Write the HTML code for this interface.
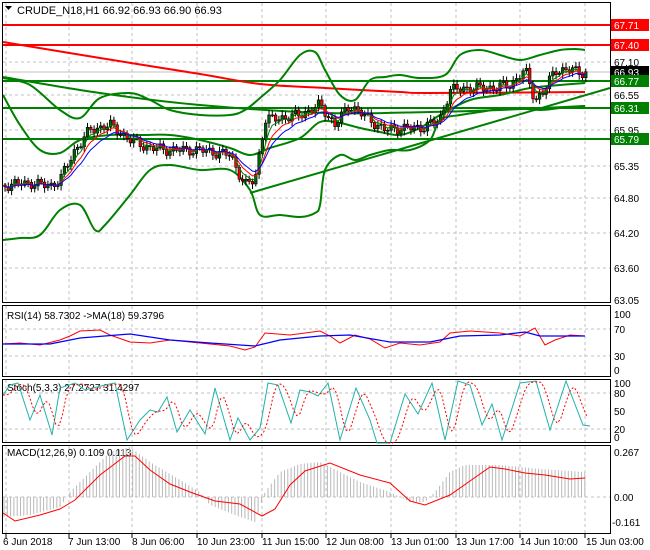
<!DOCTYPE html>
<html><head><meta charset="utf-8"><style>
html,body{margin:0;padding:0;background:#fff;width:650px;height:550px;overflow:hidden}
svg{display:block}
text{font-family:"Liberation Sans",sans-serif;font-size:10px;fill:#000}
</style></head><body>
<svg id="s" width="650" height="550" viewBox="0 0 650 550" xmlns="http://www.w3.org/2000/svg">
<rect width="650" height="550" fill="#fff"/>
<g id="grid" stroke="#c0c0c0" stroke-dasharray="3,3" stroke-width="1"></g>
<g id="main"></g>
<g fill="none" stroke="#000" stroke-width="1">
<rect x="2.5" y="2.5" width="608" height="300"/>
<rect x="2.5" y="305.5" width="608" height="71"/>
<rect x="2.5" y="379.5" width="608" height="63"/>
<rect x="2.5" y="445.5" width="608" height="88"/>
</g>
<g stroke="#000"><line x1="6" y1="534" x2="6" y2="538"/><line x1="69" y1="534" x2="69" y2="538"/><line x1="132" y1="534" x2="132" y2="538"/><line x1="197" y1="534" x2="197" y2="538"/><line x1="262" y1="534" x2="262" y2="538"/><line x1="326" y1="534" x2="326" y2="538"/><line x1="391" y1="534" x2="391" y2="538"/><line x1="456" y1="534" x2="456" y2="538"/><line x1="520" y1="534" x2="520" y2="538"/><line x1="585" y1="534" x2="585" y2="538"/></g>
<path d="M5 6 L12 6 L8.5 10 Z" fill="#000"/>
<text x="17" y="14" style="font-size:11px">CRUDE_N18,H1  66.92 66.93 66.90 66.93</text>
<text x="7" y="319">RSI(14) 58.7302  -&gt;MA(18) 59.3796</text>
<text x="7" y="391">Stoch(5,3,3) 27.2727 31.4297</text>
<text x="7" y="456">MACD(12,26,9) 0.109 0.113</text>
<g>
<text x="614" y="66">67.10</text>
<text x="614" y="99">66.55</text>
<text x="614" y="134">65.95</text>
<text x="614" y="170">65.35</text>
<text x="614" y="202">64.80</text>
<text x="614" y="237">64.20</text>
<text x="614" y="272">63.60</text>
<text x="614" y="304">63.05</text>
<rect x="611" y="19" width="38" height="12" fill="#f00"/><text x="614" y="29" style="fill:#fff">67.71</text>
<rect x="611" y="39" width="38" height="12" fill="#f00"/><text x="614" y="49" style="fill:#fff">67.40</text>
<rect x="611" y="66" width="38" height="12" fill="#000"/><text x="614" y="76" style="fill:#fff">66.93</text>
<rect x="611" y="75" width="38" height="12" fill="#008000"/><text x="614" y="85" style="fill:#fff">66.77</text>
<rect x="611" y="102" width="38" height="12" fill="#008000"/><text x="614" y="112" style="fill:#fff">66.31</text>
<rect x="611" y="133" width="38" height="12" fill="#008000"/><text x="614" y="143" style="fill:#fff">65.79</text>
<text x="614" y="318">100</text><text x="614" y="333">70</text><text x="614" y="360">30</text><text x="614" y="374">0</text>
<text x="614" y="387">100</text><text x="614" y="397">80</text><text x="614" y="415">50</text><text x="614" y="433">20</text><text x="614" y="441">0</text>
<text x="614" y="456">0.267</text><text x="614" y="501">0.00</text><text x="612" y="526">-0.161</text>
</g>
<g>
<text x="3" y="545">6 Jun 2018</text>
<text x="68" y="545">7 Jun 13:00</text>
<text x="132" y="545">8 Jun 06:00</text>
<text x="197" y="545">10 Jun 23:00</text>
<text x="262" y="545">11 Jun 15:00</text>
<text x="326" y="545">12 Jun 08:00</text>
<text x="391" y="545">13 Jun 01:00</text>
<text x="456" y="545">13 Jun 17:00</text>
<text x="520" y="545">14 Jun 10:00</text>
<text x="586" y="545">15 Jun 03:00</text>
</g>
</svg>
<script>
var NS="http://www.w3.org/2000/svg",S=document.getElementById('s');
function el(p,t,a){var e=document.createElementNS(NS,t);for(var k in a)e.setAttribute(k,a[k]);p.appendChild(e);return e;}
function ip(P,x){if(x<=P[0][0])return P[0][1];for(var i=1;i<P.length;i++){if(x<=P[i][0]){var a=P[i-1],b=P[i];return a[1]+(b[1]-a[1])*(x-a[0])/(b[0]-a[0]);}}return P[P.length-1][1];}
function pl(g,P,c,w,d){var s=P.map(function(p){return p[0].toFixed(1)+","+p[1].toFixed(1)}).join(" ");var a={points:s,fill:"none",stroke:c,"stroke-width":w};if(d)a["stroke-dasharray"]=d;el(g,"polyline",a);}
function sm(g,P,c,w){var d="M"+P[0][0]+" "+P[0][1];for(var i=0;i<P.length-1;i++){var p0=P[i>0?i-1:0],p1=P[i],p2=P[i+1],p3=P[i+2<P.length?i+2:i+1];
var c1x=p1[0]+(p2[0]-p0[0])/6,c1y=p1[1]+(p2[1]-p0[1])/6,c2x=p2[0]-(p3[0]-p1[0])/6,c2y=p2[1]-(p3[1]-p1[1])/6;
d+=" C"+c1x.toFixed(1)+" "+c1y.toFixed(1)+" "+c2x.toFixed(1)+" "+c2y.toFixed(1)+" "+p2[0]+" "+p2[1];}
el(g,"path",{d:d,fill:"none",stroke:c,"stroke-width":w});}
var G=document.getElementById('grid');
[6,69,132,197,262,326,391,456,520,585].forEach(function(x){el(G,"line",{x1:x,y1:3,x2:x,y2:302});el(G,"line",{x1:x,y1:306,x2:x,y2:376});el(G,"line",{x1:x,y1:380,x2:x,y2:442});el(G,"line",{x1:x,y1:446,x2:x,y2:533});});
[62,95,130,166,198,233,268].forEach(function(y){el(G,"line",{x1:3,y1:y,x2:610,y2:y});});
[329,356,393,429,497].forEach(function(y){el(G,"line",{x1:3,y1:y,x2:610,y2:y});});
var M=document.getElementById('main');
el(M,"line",{x1:3,y1:72,x2:610,y2:72,stroke:"#c0c0c0"});
[[25,"#f00"],[45,"#f00"],[81,"#008000"],[108,"#008000"],[139,"#008000"]].forEach(function(l){el(M,"line",{x1:3,y1:l[0],x2:610,y2:l[0],stroke:l[1],"stroke-width":2});});
sm(M,[[3,42],[100,58],[200,74],[260,84],[325,88],[400,92],[430,93],[585,92]],"#f00",2);
sm(M,[[3,77],[100,93],[200,105],[325,113],[430,112],[500,110],[585,106]],"#008000",2);
pl(M,[[250,193],[610,88]],"#008000",2);
sm(M,[[3,78],[30,85],[60,110],[80,118],[100,98],[130,93],[150,100],[170,110],[200,115],[230,115],[245,110],[260,98],[280,80],[300,55],[315,52],[325,70],[340,95],[355,100],[370,80],[385,77],[400,75],[420,78],[445,75],[460,55],[480,50],[500,55],[520,60],[540,55],[560,50],[575,49],[585,50]],"#008000",2);
sm(M,[[3,240],[20,238],[40,235],[60,210],[80,205],[95,230],[105,225],[130,195],[150,170],[170,165],[200,170],[230,170],[250,190],[260,215],[280,215],[300,217],[315,213],[320,205],[325,170],[340,155],[355,160],[370,155],[390,150],[410,150],[430,140],[440,120],[460,115],[480,112],[510,108],[540,110],[560,108],[585,106]],"#008000",2);
sm(M,[[3,95],[20,125],[40,150],[60,153],[80,140],[110,135],[140,135],[170,135],[200,140],[230,148],[250,155],[270,148],[300,138],[320,122],[340,123],[360,128],[380,132],[400,135],[420,128],[440,115],[470,100],[500,95],[530,88],[560,85],[585,83]],"#008000",2);
var PP=[[5,185],[30,183],[50,186],[60,180],[75,150],[90,130],[110,125],[130,140],[150,148],[170,150],[200,150],[230,155],[245,185],[255,180],[265,120],[280,118],[300,115],[320,105],[335,125],[350,105],[370,120],[385,130],[400,128],[420,128],[440,120],[450,90],[470,88],[490,88],[510,85],[525,70],[535,100],[545,90],[555,70],[570,70],[585,73]];
var prev=ip(PP,5),cl=[],xs=[];
for(var x=5,i=0;x<=586;x+=3.3,i++){
 var c=ip(PP,x)+4*Math.sin(i*1.7)+2*Math.sin(i*0.9+1);
 var o=prev;prev=c;xs.push(x);cl.push(c);
 var hi=Math.min(o,c)-2-3*Math.abs(Math.sin(i*2.3)),lo=Math.max(o,c)+2+3*Math.abs(Math.cos(i*1.3));
 el(M,"line",{x1:x,y1:hi,x2:x,y2:lo,stroke:"#000"});
 var bull=c<o;
 el(M,"rect",{x:x-1.3,y:Math.min(o,c),width:2.6,height:Math.max(1,Math.abs(o-c)),fill:bull?"#006400":"#f00",stroke:"#000","stroke-width":0.6});
}
function ema(a,n){var k=2/(n+1),r=[],v=a[0];a.forEach(function(t){v=v+k*(t-v);r.push(v);});return r;}
[[4,"#008000"],[7,"#f00"],[11,"#00f"]].forEach(function(m){var e=ema(cl,m[0]);pl(M,xs.map(function(x,i){return [x,e[i]]}),m[1],1);});
pl(S,[[3,344],[20,343],[40,345],[60,340],[70,336],[80,331],[100,330],[110,335],[130,342],[150,343],[170,340],[200,343],[230,346],[245,350],[255,347],[265,333],[290,335],[320,331],[330,336],[340,343],[355,335],[370,339],[385,348],[400,343],[420,345],[440,342],[450,333],[470,331],[500,333],[520,336],[535,328],[545,345],[555,340],[570,335],[585,336]],"#f00",1);
pl(S,[[3,344],[50,344],[80,338],[130,334],[170,340],[210,343],[255,346],[280,340],[320,336],[350,335],[390,342],[430,342],[460,336],[500,335],[525,332],[540,336],[585,336]],"#00f",1.2);
var ST=[[3,395],[10,385],[18,383],[30,420],[40,395],[52,435],[60,388],[75,383],[85,390],[105,385],[115,383],[127,440],[140,420],[150,410],[158,412],[167,397],[177,432],[190,410],[205,434],[215,388],[230,440],[238,418],[250,440],[260,428],[268,383],[278,385],[291,423],[300,390],[310,392],[318,396],[328,383],[340,440],[356,388],[370,420],[377,443],[390,443],[405,394],[418,414],[432,383],[445,440],[458,381],[470,385],[482,425],[492,404],[502,440],[520,383],[536,381],[550,430],[566,381],[583,425],[590,426]];
pl(S,ST,"#20b2aa",1);
var SR=[];for(var x=3;x<=590;x+=3.3){var v=(ip(ST,x-4)+ip(ST,x-7)+ip(ST,x-10))/3;SR.push([x,v]);}
pl(S,SR,"#f00",1,"2,2");
var H=[[3,-20],[30,-18],[60,-10],[70,5],[90,25],[110,45],[130,50],[150,35],[175,20],[200,5],[210,-8],[240,-20],[255,-25],[265,5],[280,25],[300,33],[320,35],[340,25],[360,15],[390,5],[410,-5],[425,-5],[435,5],[450,25],[465,32],[500,32],[540,28],[585,25]];
var HG=el(S,"g",{stroke:"#b8b8b8","stroke-width":1});
for(var x=4;x<=585;x+=3.3){var h=ip(H,x);el(HG,"line",{x1:x,y1:497,x2:x,y2:497-h});}
pl(S,[[3,513],[15,521],[40,515],[60,509],[75,500],[100,475],[125,456],[135,456],[150,470],[170,484],[190,492],[215,501],[240,504],[262,516],[275,509],[290,485],[305,471],[330,463],[360,475],[390,483],[410,501],[425,505],[450,495],[470,481],[490,467],[505,469],[525,473],[545,475],[570,479],[585,478]],"#f00",1);
</script>
</body></html>
